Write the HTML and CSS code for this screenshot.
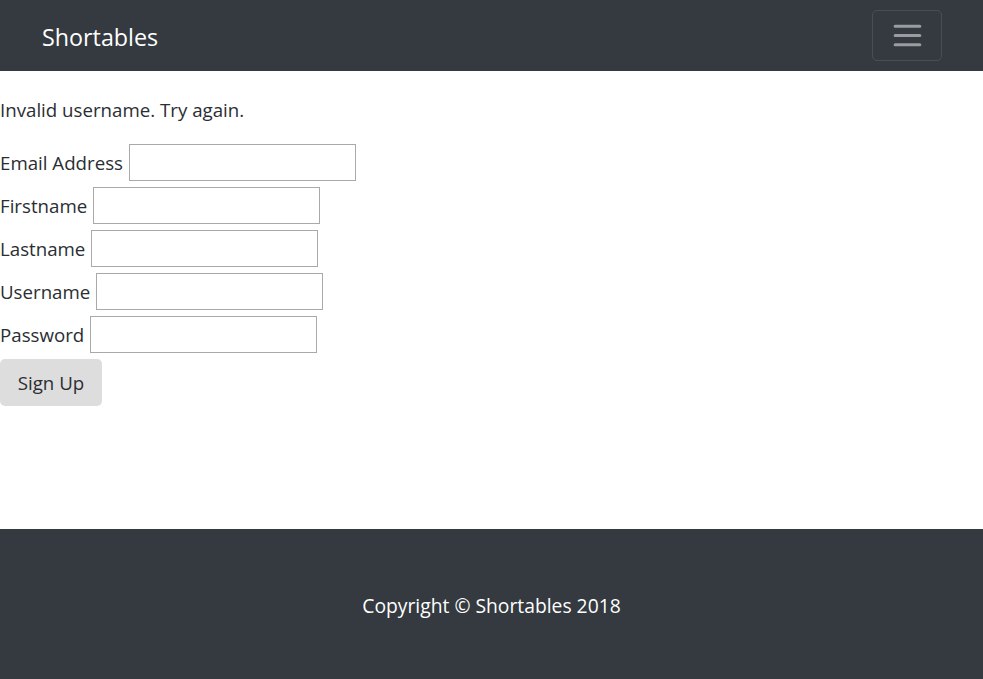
FILE: index.html
```html
<!DOCTYPE html>
<html>
<head>
<meta charset="utf-8">
<title>Shortables</title>
<link rel="stylesheet" href="styles.css">
</head>
<body>
<nav class="navbar">
  <a class="brand" href="#">Shortables</a>
  <button class="toggler" type="button" aria-label="Toggle navigation">
    <svg width="30" height="30" viewBox="0 0 30 30"><path stroke="rgba(255,255,255,0.5)" stroke-width="2.5" stroke-linecap="round" d="M5 7.5h20M5 15h20M5 22.5h20"/></svg>
  </button>
</nav>
<main class="main">
  <p class="message">Invalid username. Try again.</p>
  <form class="form">
    <div class="row"><label>Email Address</label> <input type="text"></div>
    <div class="row"><label>Firstname</label> <input type="text"></div>
    <div class="row"><label>Lastname</label> <input type="text"></div>
    <div class="row"><label>Username</label> <input type="text"></div>
    <div class="row"><label>Password</label> <input type="password"></div>
    <button class="btn" type="button">Sign Up</button>
  </form>
</main>
<footer class="footer">
  <p>Copyright © Shortables 2018</p>
</footer>
</body>
</html>
```

FILE: styles.css
```css
html, body {
  margin: 0;
  padding: 0;
}
body {
  font-family: "Open Sans", "Noto Sans", sans-serif;
  font-size: 18.7px;
  color: #2a2e33;
  background: #fff;
}
.navbar {
  background: #343a40;
  height: 71px;
  display: flex;
  align-items: center;
  justify-content: space-between;
  padding: 0 41px 0 42px;
  box-sizing: border-box;
}
.brand {
  color: #fff;
  text-decoration: none;
  font-size: 23.3px;
  line-height: 1;
  padding-top: 4px;
}
.toggler {
  width: 70px;
  height: 51px;
  background: transparent;
  border: 1px solid rgba(255,255,255,0.1);
  border-radius: 5px;
  display: flex;
  align-items: center;
  justify-content: center;
  padding: 0;
}
.toggler svg {
  width: 37px;
  height: 37px;
}
.main {
  height: 458px;
  padding-top: 24px;
  box-sizing: border-box;
}
.message {
  margin: 0 0 19px;
  line-height: 30px;
}
.row {
  display: flex;
  align-items: center;
  height: 37px;
  margin-bottom: 6px;
}
.row label {
  line-height: 30px;
  margin-right: 6px;
}
.row input {
  width: 227px;
  height: 37px;
  box-sizing: border-box;
  border: 1px solid #a9a9a9;
  margin: 0;
  padding: 2px 4px;
  font: inherit;
}
.btn {
  font: inherit;
  color: #2a2e33;
  background: #dddddd;
  border: none;
  border-radius: 5px;
  height: 47px;
  width: 102px;
  padding: 0;
  margin: 0;
}
.footer {
  background: #343a40;
  height: 150px;
  display: flex;
  align-items: center;
  justify-content: center;
  color: #fff;
}
.footer p {
  margin: 0;
  font-size: 19.3px;
  padding-top: 2px;
}
```
